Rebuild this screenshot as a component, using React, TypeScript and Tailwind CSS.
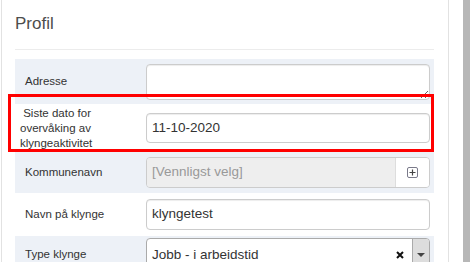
const font = { fontFamily: '"Liberation Sans", Arial, sans-serif' };

function PlusBoxIcon() {
  return (
    <svg width="11" height="11" viewBox="0 0 11 11">
      <rect x="0.5" y="0.5" width="10" height="10" rx="1.5" fill="#fff" stroke="#7a7a8a" />
      <path d="M5.5 2.5v6M2.5 5.5h6" stroke="#444" strokeWidth="1.2" />
    </svg>
  );
}

function ClearIcon() {
  return (
    <svg width="8" height="8" viewBox="0 0 8 8">
      <path d="M1 1l6 6M7 1l-6 6" stroke="#111" strokeWidth="2" />
    </svg>
  );
}

export default function App() {
  return (
    <div className="flex w-[470px] h-[262px] overflow-hidden bg-white" style={font}>
      <div className="relative ml-[1px] w-[448px] shrink-0 border-l border-r border-[#e2e2e2] pl-[13px] pr-[14px]">
        <h2 className="pt-[14px] text-[17px] leading-[19px] text-[#4d4d4d]">Profil</h2>
        <div className="mt-[16px] h-px bg-[#ececec]" />

        <div className="mt-[9px] text-[11.5px] text-[#333]">
          <div className="flex h-[45px] items-center bg-[#edf1f7]">
            <div className="w-[131px] pl-[10px]">Adresse</div>
            <div className="flex-1 pr-[4px]">
              <textarea
                readOnly
                className="block h-[36px] w-full rounded-[4px] border border-[#ccc] bg-white shadow-[inset_0_1px_1px_rgba(0,0,0,0.075)]"
              />
            </div>
          </div>

          <div className="flex h-[48px] items-center bg-white">
            <div className="w-[131px] pl-[5px] leading-[15px]">
              {'\u00a0'}Siste dato for
              <br />
              overvåking av
              <br />
              klyngeaktivitet
            </div>
            <div className="flex-1 pr-[4px]">
              <div className="flex h-[30px] items-center rounded-[4px] border border-[#ccc] bg-white px-[5px] text-[13.5px] text-[#333] shadow-[inset_0_1px_1px_rgba(0,0,0,0.075)]">
                11-10-2020
              </div>
            </div>
          </div>

          <div className="flex h-[41px] items-center bg-[#edf1f7]">
            <div className="w-[131px] pl-[10px]">Kommunenavn</div>
            <div className="flex-1 pr-[4px]">
              <div className="flex h-[31px] overflow-hidden rounded-[4px] border border-[#ccc]">
                <div className="flex flex-1 items-center bg-[#eee] px-[5px] text-[13.5px] text-[#999]">
                  [Vennligst velg]
                </div>
                <div className="flex w-[34px] items-center justify-center border-l border-[#ddd] bg-white">
                  <PlusBoxIcon />
                </div>
              </div>
            </div>
          </div>

          <div className="flex h-[43px] items-center bg-white">
            <div className="w-[131px] pl-[10px]">Navn på klynge</div>
            <div className="flex-1 pr-[4px]">
              <div className="flex h-[31px] items-center rounded-[4px] border border-[#ccc] bg-white px-[5px] text-[13.5px] text-[#333] shadow-[inset_0_1px_1px_rgba(0,0,0,0.075)]">
                klyngetest
              </div>
            </div>
          </div>

          <div className="flex h-[40px] items-start bg-[#edf1f7] pt-[2px]">
            <div className="flex h-[34px] w-[131px] items-center pl-[10px]">Type klynge</div>
            <div className="flex-1 pr-[4px]">
              <div className="flex h-[34px] overflow-hidden rounded-[4px] border border-[#aaa] bg-white">
                <div className="flex flex-1 items-center px-[5px] text-[13.5px] text-[#333]">Jobb - i arbeidstid</div>
                <div className="flex w-[16px] items-center">
                  <ClearIcon />
                </div>
                <div className="flex w-[17px] items-center justify-center border-l border-[#aaa] bg-[#ddd]">
                  <div className="h-0 w-0 border-l-[4px] border-r-[4px] border-t-[4px] border-l-transparent border-r-transparent border-t-[#444]" />
                </div>
              </div>
            </div>
          </div>
        </div>

        <div className="pointer-events-none absolute left-[6px] top-[94px] h-[58px] w-[426px] border-[3px] border-[#f00]" />
      </div>
      <div className="flex-1" />
      <div className="w-[7px] bg-[#b7b7b7]" />
    </div>
  );
}
